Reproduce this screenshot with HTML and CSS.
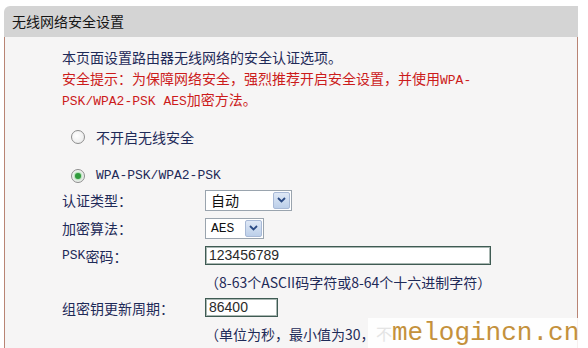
FILE: index.html
```html
<!doctype html>
<html lang="zh-CN">
    <head>
        <meta charset="UTF-8" />
        <title>无线网络安全设置</title>
        <link rel="stylesheet" href="styles.css">
    </head>
    <body>
        <div class="panel">
            <div class="panel-head">无线网络安全设置</div>
            <div class="panel-body">
                <div class="intro">
                    <div class="line">本页面设置路由器无线网络的安全认证选项。</div>
                    <div class="line warn">安全提示：为保障网络安全，强烈推荐开启安全设置，并使用<span class="mono">WPA-</span></div>
                    <div class="line warn"><span class="mono">PSK/WPA2-PSK AES</span>加密方法。</div>
                </div>

                <div class="radio-row first">
                    <span class="radio"></span>
                    <span>不开启无线安全</span>
                </div>
                <div class="radio-row">
                    <span class="radio checked"></span>
                    <span class="mono">WPA-PSK/WPA2-PSK</span>
                </div>

                <div class="form">
                    <div class="label">认证类型：</div>
                    <div class="field">
                        <div class="select wide">
                            <span class="select-text">自动</span>
                            <span class="select-btn">
                                <svg width="9" height="6" viewBox="0 0 9 6"><path d="M1 1 L4.5 4.5 L8 1" fill="none" stroke="#2b4a84" stroke-width="1.8"/></svg>
                            </span>
                        </div>
                    </div>

                    <div class="label">加密算法：</div>
                    <div class="field">
                        <div class="select narrow">
                            <span class="select-text mono">AES</span>
                            <span class="select-btn">
                                <svg width="9" height="6" viewBox="0 0 9 6"><path d="M1 1 L4.5 4.5 L8 1" fill="none" stroke="#2b4a84" stroke-width="1.8"/></svg>
                            </span>
                        </div>
                    </div>

                    <div class="label"><span class="mono">PSK</span>密码：</div>
                    <div class="field">
                        <div class="input long">123456789</div>
                    </div>

                    <div class="label"></div>
                    <div class="field hint">（8-63个ASCII码字符或8-64个十六进制字符）</div>

                    <div class="label">组密钥更新周期：</div>
                    <div class="field">
                        <div class="input short">86400</div>
                    </div>

                    <div class="label"></div>
                    <div class="field hint">（单位为秒，最小值为30，</div>
                </div>
            </div>
        </div>

        <div class="watermark">
            <span class="ghost">不</span>
            <span class="mark">melogincn.cn</span>
        </div>
    </body>
</html>
```

FILE: styles.css
```css
body {
    margin: 0;
    background: #ffffff;
    font-family: "Noto Sans CJK SC", "Liberation Sans", sans-serif;
    font-size: 14px;
    color: #1e2a58;
    overflow: hidden;
    height: 348px;
}
.panel {
    margin: 6px 0 0 4px;
    width: 574px;
}
.panel-head {
    height: 31px;
    line-height: 31px;
    background: #d4d4d4;
    border-top-left-radius: 6px;
    padding-left: 8px;
    color: #151515;
    font-size: 14px;
}
.panel-body {
    background: #f6f5f5;
    border-left: 1px solid #b98474;
    border-right: 1px solid #b98474;
    padding: 10px 0 0 57px;
    height: 301px;
}
.mono {
    font-family: "Liberation Mono", "DejaVu Sans Mono", monospace;
    font-size: 13px;
}
.line {
    height: 21px;
    line-height: 21px;
    white-space: nowrap;
}
.warn {
    color: #cc1b1b;
}
.radio-row {
    display: flex;
    align-items: center;
    gap: 11px;
    height: 21px;
    padding-left: 9px;
    margin-top: 18px;
}
.radio-row.first {
    margin-top: 16px;
}
.radio {
    width: 12px;
    height: 12px;
    border: 1px solid #8d8d8d;
    border-radius: 50%;
    background: radial-gradient(circle at 40% 40%, #ffffff 0%, #e6e6e6 100%);
    display: flex;
    align-items: center;
    justify-content: center;
}
.radio.checked::after {
    content: "";
    width: 6px;
    height: 6px;
    border-radius: 50%;
    background: #2f9b3c;
    box-shadow: 0 0 2px 1px #9fd8a4;
}
.form {
    display: grid;
    grid-template-columns: 143px 1fr;
    grid-template-rows: 28px 28px 27px 26px 25px 28px;
}
.label,
.field {
    display: flex;
    align-items: center;
}
.select {
    display: flex;
    align-items: center;
    justify-content: space-between;
    height: 19px;
    background: #ffffff;
    border: 1px solid #9aa4ae;
    padding: 0 1px 0 5px;
}
.select.wide {
    width: 79px;
}
.select.narrow {
    width: 51px;
}
.select-btn {
    width: 17px;
    height: 17px;
    display: flex;
    align-items: center;
    justify-content: center;
    background: linear-gradient(#dfe8f6, #bccfe9);
    border: 1px solid #a8b9d6;
    box-sizing: border-box;
    border-radius: 2px;
}
.select-text {
    color: #111;
}
.input {
    height: 17px;
    line-height: 17px;
    background: #ffffff;
    border: 1px solid #3f5b53;
    box-shadow: inset 0 0 0 1px #a9b7b2;
    padding: 0 3px;
    font-family: "Liberation Sans", sans-serif;
    font-size: 14px;
    color: #2a2a2a;
}
.input.long {
    width: 278px;
}
.input.short {
    width: 65px;
}
.hint {
    color: #1e2a58;
}
.watermark {
    position: absolute;
    left: 368px;
    top: 318px;
    width: 220px;
    height: 30px;
    background: rgba(255, 255, 255, 0.88);
    display: flex;
    align-items: center;
}
.ghost {
    color: #e4e4e4;
    font-size: 16px;
    margin-left: 8px;
    width: 16px;
}
.mark {
    font-family: "Liberation Mono", monospace;
    font-size: 26px;
    color: #c4913c;
}
```
